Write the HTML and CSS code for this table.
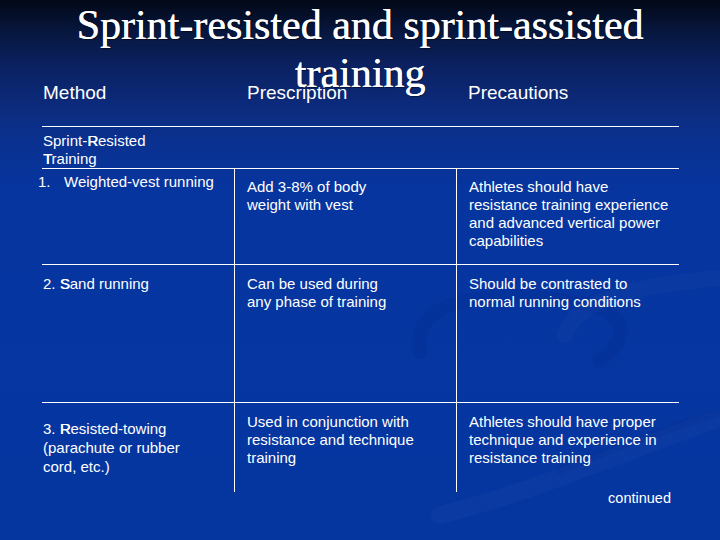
FILE: index.html
```html
<!DOCTYPE html>
<html>
<head>
<meta charset="utf-8">
<link rel="stylesheet" href="styles.css">
</head>
<body>
<div class="slide">
  <div class="top">
    <h1 class="title">Sprint-resisted and sprint-assisted<br>training</h1>
    <div class="head">
      <div class="h-method">Method</div>
      <div class="h-col">Prescription</div>
      <div class="h-col h-last">Precautions</div>
    </div>
  </div>

  <div class="table">
    <div class="section">Sprint-<span class="cap">R</span>esisted<br><span class="cap">T</span>raining</div>

    <div class="row row1">
      <div class="cell method m1"><span class="item"><span class="num">1.</span><span>Weighted-vest running</span></span></div>
      <div class="cell pres p1">Add 3-8% of body<br>weight with vest</div>
      <div class="cell prec p1">Athletes should have<br>resistance training experience<br>and advanced vertical power<br>capabilities</div>
    </div>

    <div class="row row2">
      <div class="cell method p2">2. <span class="cap">S</span>and running</div>
      <div class="cell pres p2">Can be used during<br>any phase of training</div>
      <div class="cell prec p2">Should be contrasted to<br>normal running conditions</div>
    </div>

    <div class="row row3">
      <div class="cell method m3">3. <span class="cap">R</span>esisted-towing<br>(parachute or rubber<br>cord, etc.)</div>
      <div class="cell pres p3">Used in conjunction with<br>resistance and technique<br>training</div>
      <div class="cell prec p3">Athletes should have proper<br>technique and experience in<br>resistance training</div>
    </div>
  </div>

  <div class="continued">continued</div>
</div>
</body>
</html>
```

FILE: styles.css
```css
html, body {
  margin: 0;
  padding: 0;
}

body {
  width: 720px;
  height: 540px;
  overflow: hidden;
  background: #0536a0;
}

.slide {
  width: 720px;
  height: 540px;
  overflow: hidden;
  color: #ffffff;
  font-family: "Liberation Sans", Arial, sans-serif;
  background-color: #0536a0;
  background-image:
    url("data:image/svg+xml;utf8,<svg xmlns='http://www.w3.org/2000/svg' width='720' height='540' viewBox='0 0 720 540'><g fill='none' stroke-linecap='round'><path d='M420 352 C410 305 470 290 560 300 C620 306 640 330 600 360' stroke='%23001a66' stroke-opacity='0.08' stroke-width='14'/><path d='M565 335 C575 300 640 285 720 278' stroke='%23ffffff' stroke-opacity='0.025' stroke-width='16'/><path d='M440 515 C540 490 640 445 720 418' stroke='%23ffffff' stroke-opacity='0.025' stroke-width='18'/><path d='M560 470 C620 445 680 425 720 412' stroke='%23001a66' stroke-opacity='0.07' stroke-width='8'/></g></svg>"),
    linear-gradient(to bottom, #020816 0%, #07173f 6%, #0b2160 12%, #0c2a7a 19%, #0a3190 26%, #0635a0 36%, #0536a0 100%);
  background-repeat: no-repeat;
}

.top {
  display: grid;
  height: 104px;
}

.title {
  grid-area: 1 / 1;
  margin: 0;
  padding-top: 1px;
  font-family: "Liberation Serif", "Times New Roman", serif;
  font-weight: normal;
  font-size: 42px;
  line-height: 48px;
  text-align: center;
  text-shadow: 0.4px 0 0 #ffffff, 1px 1px 1px rgba(0, 0, 0, 0.5);
  position: relative;
  z-index: 1;
}

.head {
  grid-area: 1 / 1;
  align-self: start;
  margin-top: 82px;
  margin-left: 42px;
  display: grid;
  grid-template-columns: 193px 222px 222px;
  font-size: 19px;
  line-height: 22px;
}

.h-method {
  padding-left: 1px;
}

.h-col {
  padding-left: 12px;
}

.h-last {
  padding-left: 11px;
}

.table {
  margin-top: 22px;
  margin-left: 42px;
  width: 637px;
  border-top: 1px solid #ffffff;
  font-size: 15px;
  line-height: 18px;
}

.cap {
  text-shadow: 0.5px 0 0 #ffffff;
}

.section {
  height: 36px;
  padding: 5px 0 0 1px;
  border-bottom: 1px solid #ffffff;
}

.row {
  display: grid;
  grid-template-columns: 193px 222px 222px;
}

.row1 {
  height: 95px;
  border-bottom: 1px solid #ffffff;
}

.row2 {
  height: 137px;
  border-bottom: 1px solid #ffffff;
}

.row3 {
  height: 89px;
}

.cell {
  box-sizing: border-box;
}

.method {
  padding-left: 1px;
  border-right: 1px solid #ffffff;
}

.pres {
  padding-left: 12px;
  border-right: 1px solid #ffffff;
}

.prec {
  padding-left: 12px;
}

.m1 {
  padding-top: 4px;
}

.p1 {
  padding-top: 9px;
}

.p2 {
  padding-top: 10px;
}

.m3 {
  padding-top: 16px;
  line-height: 19px;
}

.p3 {
  padding-top: 10px;
}

.item {
  display: flex;
}

.num {
  display: inline-block;
  width: 26px;
  margin-left: -5px;
  flex: none;
}

.continued {
  width: 671px;
  margin-top: -3px;
  text-align: right;
  font-size: 14.5px;
  line-height: 18px;
}
```
